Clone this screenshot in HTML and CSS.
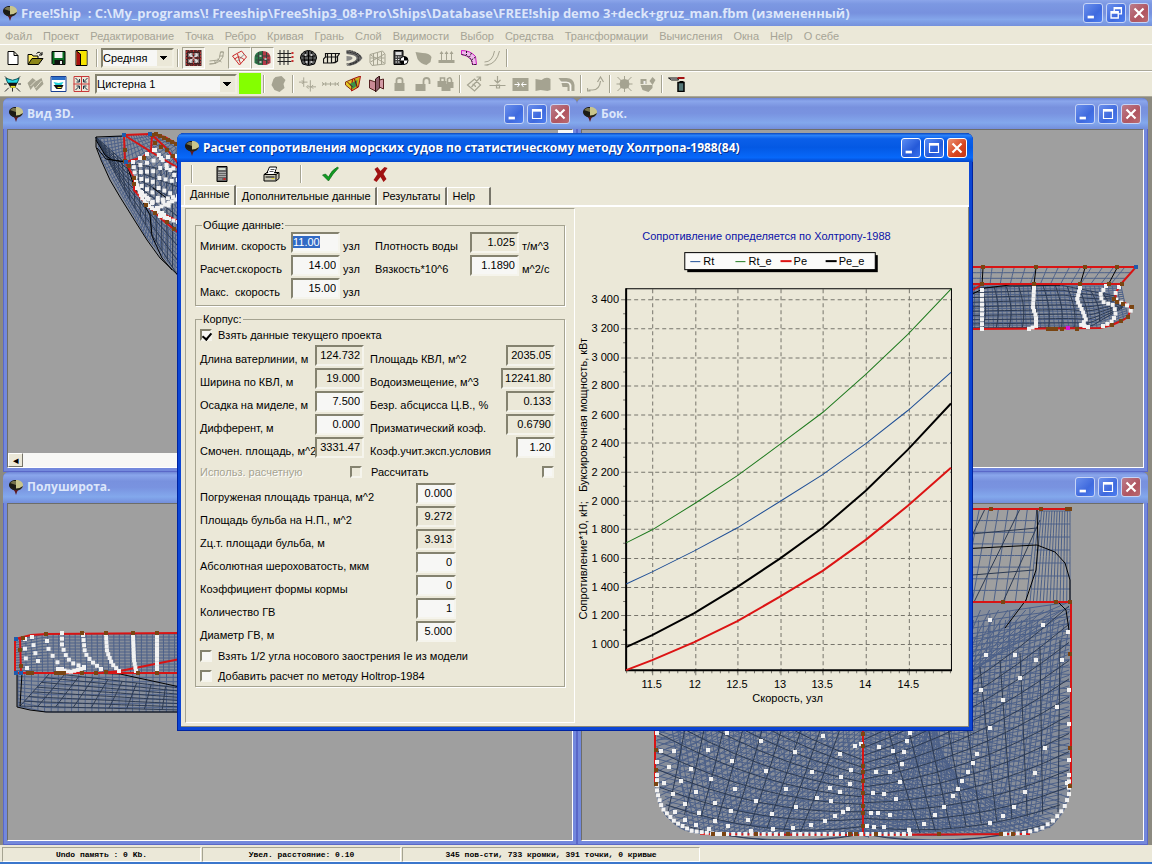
FILE: index.html
```html
<!DOCTYPE html>
<html lang="ru">
<head>
<meta charset="utf-8">
<title>Free!Ship</title>
<link rel="stylesheet" href="styles.css">
</head>
<body>
<svg class="sprites" aria-hidden="true">
  <symbol id="app" viewBox="0 0 16 16"><path d="M8 1C4 1 1 3 1 6s3 5 7 5z" fill="#1c1a14"/><path d="M8 1c4 0 7 2 7 5s-3 5-7 5z" fill="#c9c58c"/><path d="M2 4l3-2 3 0v4z" fill="#77734c"/><path d="M2 7q6 5 13 0-1 4-7 5-5-1-6-5z" fill="#222019"/><path d="M6 11h4l-1 2-1 3-1-3z" fill="#5d1a20"/></symbol>
  <symbol id="min" viewBox="0 0 20 20"><path d="M4 13h7v3H4z" fill="#fff"/></symbol>
  <symbol id="max" viewBox="0 0 20 20"><path d="M5 5h10v10H5zM5 6.500h10" fill="none" stroke="#fff" stroke-width="1.300"/><path d="M5 4.500h10v2.500H5z" fill="#fff"/></symbol>
  <symbol id="restore" viewBox="0 0 20 20"><path d="M8 8V4h8v7h-3M8 5h8" fill="none" stroke="#fff" stroke-width="1.500"/><path d="M4.500 8.500h8v7h-8zM4 10h9" fill="none" stroke="#fff" stroke-width="1.500"/></symbol>
  <symbol id="cls" viewBox="0 0 20 20"><path d="M5 5l10 10M15 5L5 15" stroke="#fff" stroke-width="2.400"/></symbol>

  <symbol id="new" viewBox="0 0 16 16"><path d="M3.500 1.500h6l4 4v9h-10zM9.500 1.500v4h4" fill="#fff" stroke="#000"/></symbol>
  <symbol id="open" viewBox="0 0 16 16"><path d="M.5 14V4.500h4l1 1.500h5v3" fill="#ffee60" stroke="#000"/><path d="M.5 14.500l4-6h11l-4.500 6z" fill="#8b8518" stroke="#000"/><path d="M9 3.500q3-3 5 1M14.500 2v3h-3" fill="none" stroke="#000"/></symbol>
  <symbol id="save" viewBox="0 0 16 16"><path d="M1.500 1.500h13v13h-12l-1-1z" fill="#0a6f22" stroke="#000"/><path d="M4 2h8v6H4z" fill="#f4f4f4"/><path d="M4 10h9v5H4z" fill="#111"/><path d="M9.500 11h2v3h-2z" fill="#eee"/></symbol>
  <symbol id="exit" viewBox="0 0 16 16"><path d="M2.500.5h11v15h-11z" fill="#fff35a" stroke="#000"/><path d="M7 1h6v14H7z" fill="#f6e400"/><path d="M3 1l4 3v11l-4 0z" fill="#a81010"/><path d="M3 1l4 3v11" fill="none" stroke="#000"/></symbol>
  <symbol id="net" viewBox="0 0 16 16"><path d="M0 0h16v16H0z" fill="#3a2222"/><path d="M3 3h4v4H3zM9 3h4v4H9zM3 9h4v4H3zM9 9h4v4H9z" fill="#c6c6c6"/><path d="M1 1h14v14H1zM8 0v16M0 8h16" fill="none" stroke="#b03030" stroke-dasharray="2 1"/><path d="M0 4h16M0 12h16M4 0v16M12 0v16" stroke="#8c6a6a" stroke-dasharray="1 2"/><path d="M4 4l8 8M12 4l-8 8" stroke="#fff" stroke-dasharray="2 1"/></symbol>
  <symbol id="gcurve" viewBox="0 0 16 16"><path d="M1 14q10 1 11-12h3q0 12-14 12zM1 11l9-1M12 2l3 0M11 6h4M9 9l4 3M6 10l1 4" fill="none" stroke="#a5a391"/></symbol>
  <symbol id="quad" viewBox="0 0 16 16"><path d="M1 6L10 1l5 6-7 8zM3 9q4-3 5-2 3 1 5 3M6 4l3 10" fill="none" stroke="#c92a2a"/><path d="M6 11l7-7" stroke="#888"/></symbol>
  <symbol id="body" viewBox="0 0 16 16"><path d="M8 1C3 1 0 4 0 8v5l4 2h4z" fill="#2a7446"/><path d="M8 1c5 0 8 3 8 7v5l-4 2H8z" fill="#b43b48"/><path d="M1 6h14M1 10h14M8 1v14M4 2v12M12 2v12M2 13q6-8 12 0" fill="none" stroke="#34453c"/><path d="M5 5h2v2H5zM10 8h2v2h-2zM5 11h2v2H5z" fill="#bbb"/></symbol>
  <symbol id="grid" viewBox="0 0 16 16"><path d="M2.500 0v15M6.500 0v15M10.500 0v15M0 3.500h14M0 7.500h14M0 11.500h14" stroke="#222"/><path d="M14 2h2v2h-2zM14 6h2v2h-2zM14 10h2v2h-2z" fill="#c33"/></symbol>
  <symbol id="globe" viewBox="0 0 16 16"><path d="M8 .5C3 1 0 4 0 8l2 6 6 1.500 6-1.500 2-6C16 4 13 1 8 .500z" fill="#5b5d5d" stroke="#000"/><path d="M1 6h14M1 10h14M8 1v14M5 2q-3 6 0 12M11 2q3 6 0 12" fill="none" stroke="#000"/><path d="M4 4h2v2H4zM10 4h2v2h-2zM5 11h2v2H5zM10 11h2v2h-2z" fill="#ccc"/></symbol>
  <symbol id="hull" viewBox="0 0 16 16"><path d="M2 3.500h14l-2 3v4.500q-2 2-6 2H0V9l2-2zM2 7h12M4 4v9M8 4v9M12 4v8" fill="none" stroke="#111" stroke-width="1.200"/></symbol>
  <symbol id="waves" viewBox="0 0 16 16"><path d="M0 0q14 2 16 8Q12 15 0 16l3-3q7-2 7-5 0-3-10-4z" fill="#696969"/><path d="M0 6q6 0 6 2t-6 3z" fill="#8a8a88"/><path d="M0 2q12 1 12 6t-12 6M2 0q12 3 12 8M3 15q8-2 10-6" fill="none" stroke="#222" stroke-dasharray="2 1"/></symbol>
  <symbol id="frame" viewBox="0 0 16 16"><path d="M.5 4.500L13 1l2.500 3v10l-13 1.500-2-3zM1 12L15 4M4 3v12M8 3v12M12 2v12M1 8h14M1 5l14 8" fill="none" stroke="#a5a391"/></symbol>
  <symbol id="calc" viewBox="0 0 16 16"><path d="M1.500.5h9v14h-9z" fill="#444" stroke="#000"/><path d="M3 2h6v3H3z" fill="#ddd"/><path d="M3 7h6M3 9.500h6M3 12h6" stroke="#eee" stroke-dasharray="1.500 1"/><circle cx="11.500" cy="10.500" r="4" fill="#fff" stroke="#000"/><path d="M11.500 6.500a4 4 0 0 1 4 4h-4zM11.500 10.500v4a4 4 0 0 1-4-4z"/></symbol>
  <symbol id="blob" viewBox="0 0 16 16"><path d="M0 2l7 1q7 0 9 4l-1 5-4 3q-6-1-9-6z" fill="#a5a391"/></symbol>
  <symbol id="arrows" viewBox="0 0 16 16"><path d="M3 11V2M8 11V2M13 11V2" stroke="#a5a391"/><path d="M0 11.500h16" stroke="#a5a391" stroke-width="3"/><path d="M1 4l2-3 2 3zM6 4l2-3 2 3zM11 4l2-3 2 3z" fill="#a5a391"/></symbol>
  <symbol id="mag" viewBox="0 0 16 16"><path d="M0 .5q9 0 14 6l1 8h-4q0-8-11-10z" fill="#f0b8ec" stroke="#cc19c0"/><path d="M0 4.500q10 1 11 10h4M5 1v4M10 3l-2 4M14 7l-4 3" fill="none" stroke="#222" stroke-dasharray="2 1"/></symbol>
  <symbol id="swoop" viewBox="0 0 16 16"><path d="M0 12q8 0 10-11M2 15Q12 14 15 1M0 15h4" fill="none" stroke="#a5a391"/></symbol>

  <symbol id="hi1" viewBox="0 0 18 16"><path d="M1 0l3 3M17 0l-3 3M0 8h3M18 8h-3M1 16l4-4M17 16l-4-4M9 12v4" stroke="#222"/><path d="M2 2l7 2 7-2-2 5H4z" fill="#20d5df" stroke="#084f55"/><path d="M4 7h10l-2 5H7z" fill="#111"/><path d="M7 10h5v2H7z" fill="#e8e42b"/></symbol>
  <symbol id="gray2" viewBox="0 0 16 16"><path d="M0 7l5-5 4 3 5-3 2 6-7 7-3-5-3 4z" fill="#a5a391"/><path d="M3 10l6-6M8 12l6-7" stroke="#e2dfcc"/></symbol>
  <symbol id="win2" viewBox="0 0 16 16"><path d="M.5.500h15v15H.5z" fill="#fff" stroke="#173f92"/><path d="M1 1h14v3H1z" fill="#2e70c9"/><path d="M3 6l5 1 5-1-2 3H5z" fill="#20cdd7"/><path d="M3 9h10l-2 4H6z" fill="#111"/><path d="M7 11h4v1H7z" fill="#f0e030"/></symbol>
  <symbol id="cross4" viewBox="0 0 16 16"><path d="M.5.500h15v15H.5zM8 0v16M0 8h16" fill="none" stroke="#c83a3a"/><path d="M2 2l4 4M6 3v3H3M14 2l-4 4M10 3v3h3M2 14l4-4M3 10h3v3M14 14l-4-4M13 10h-3v3" fill="none" stroke="#234"/></symbol>
  <symbol id="blob2" viewBox="0 0 16 16"><path d="M5 1l6-1 4 4-2 4 1 4-5 4-5-2-3-5 2-6z" fill="#a5a391"/></symbol>
  <symbol id="ax1" viewBox="0 0 18 16"><path d="M0 6h9M5 1v10M3 4l2 2-2 2M9 11h9M12 4v12M10 9l-2 2 2 2M15 9l-2 2 2 2" fill="none" stroke="#a5a391"/></symbol>
  <symbol id="ax2" viewBox="0 0 18 16"><path d="M0 8h18M4 6v4M9 6v4M14 6v4M0 6l2 2-2 2M18 6l-2 2 2 2" fill="none" stroke="#a5a391"/></symbol>
  <symbol id="yel" viewBox="0 0 16 16"><path d="M0 6L7 3l-1 11-6-5z" fill="#e4c821" stroke="#852f14"/><path d="M7 3l8-3-2 11-7 4z" fill="#c9b11b" stroke="#a11"/><path d="M4 8l8-4-1 6-4 3z" fill="#3a9148"/><path d="M2 6l5 5M9 3l3 9" stroke="#701"/></symbol>
  <symbol id="pink" viewBox="0 0 16 16"><path d="M1 4l6 2v9l-6-3z" fill="#c98995" stroke="#522"/><path d="M7 3l4-3v12l-4 4z" fill="#8e5c6b" stroke="#311"/><path d="M11 4l4-1v10l-4-2z" fill="#d39ba5" stroke="#522"/></symbol>
  <symbol id="lock" viewBox="0 0 16 16"><path d="M3 7h10v8H3z" fill="#a5a391"/><path d="M5 8V4q0-2 3-2t3 2v4" fill="none" stroke="#a5a391" stroke-width="1.800"/></symbol>
  <symbol id="unlock" viewBox="0 0 16 16"><path d="M1 8h10v7H1z" fill="#a5a391"/><path d="M9 8V5q0-3 3-3t3 3v3" fill="none" stroke="#a5a391" stroke-width="1.800"/></symbol>
  <symbol id="unlocks" viewBox="0 0 16 16"><path d="M0 5h9v6H0zM4 8h9v7H4zM10 6h6v6h-6z" fill="#a5a391"/><path d="M3 5V2h4v3M10 8V3q3-3 4 1v3" fill="none" stroke="#a5a391" stroke-width="1.600"/></symbol>
  <symbol id="diam" viewBox="0 0 16 16"><path d="M1 9l7-6 6 6-6 6zM5 11L14 1M10 1h4v4M6 8q3 1 3 3" fill="none" stroke="#a5a391" stroke-width="1.200"/></symbol>
  <symbol id="ins" viewBox="0 0 16 16"><path d="M0 9.500h16M8 0v7M5 4l3 3 3-3M7 9h3v3H7z" fill="none" stroke="#a5a391" stroke-width="1.200"/></symbol>
  <symbol id="coll" viewBox="0 0 16 16"><path d="M0 2h16v13H0z" fill="#a5a391"/><path d="M2 8.500h5M5 6l2 2.500L5 11M14 8.500H9M11 6L9 8.500l2 2.500" fill="none" stroke="#fff"/></symbol>
  <symbol id="surf" viewBox="0 0 16 16"><path d="M0 3l6 1q5-4 9-1v11l-3 1-7-1-5 1z" fill="#a5a391"/></symbol>
  <symbol id="extr" viewBox="0 0 16 16"><path d="M0 2h8q7 0 8 7v6h-3V9q-1-3-5-3H3z" fill="#a5a391"/><path d="M3 7h5q3 0 3 3v5H9v-4H4z" fill="#a5a391"/><path d="M2 6h6q4 0 4 4v5" fill="none" stroke="#fff" stroke-width=".7"/></symbol>
  <symbol id="cv" viewBox="0 0 16 16"><path d="M1 14h4q7 0 8-9M10 6l3-5 3 5M0 12v3h3" fill="none" stroke="#a5a391" stroke-width="1.200"/></symbol>
  <symbol id="star" viewBox="0 0 16 16"><path d="M1 1l14 14M15 1L1 15M8 0v16M0 8h16" stroke="#a5a391"/><path d="M4 4l4-1 4 1 1 4-1 4-4 1-4-1-1-4z" fill="#a5a391"/></symbol>
  <symbol id="team" viewBox="0 0 16 16"><path d="M1 3h6v5H1zM10 5l3-4 3 3-3 5zM1 9h12v3l-4 4-6-2z" fill="#a5a391"/><path d="M4 5h2v3H4z" fill="#eee"/></symbol>
  <symbol id="knife" viewBox="0 0 16 16"><path d="M0 2h9l1 2H3z" fill="#ddd" stroke="#111"/><path d="M9 1h7v2H9z" fill="#a31111"/><path d="M9.500 6.500h6v9h-6z" fill="#577" stroke="#000" stroke-width="1.500"/><path d="M11 5h4v2h-4z"/></symbol>

  <symbol id="dcalc" viewBox="0 0 16 16"><path d="M3.500.5h10v15h-10z" fill="#666" stroke="#000"/><path d="M5 2h7v2H5z" fill="#d6e0d0"/><path d="M5 6.500h7M5 8.500h7M5 10.500h7M5 13h3" stroke="#eee" stroke-dasharray="1 1"/><path d="M10 12h2v2h-2z" fill="#c22"/></symbol>
  <symbol id="print" viewBox="0 0 16 16"><path d="M3 8L6 1h7l-2 7" fill="#fff" stroke="#000"/><path d="M7 3h4M6 5h4" stroke="#555"/><path d="M.5 8.500l3-2h12v6l-3 2.500H.5z" fill="#c8c6b5" stroke="#000"/><path d="M4 8L6.500 2h6L10 8z" fill="#fff"/><path d="M7 3.500h4M6 5.500h4" stroke="#555"/><path d="M.5 8.500h12v6M12.500 8.500l3-2M2 11h9" fill="none" stroke="#000"/><path d="M8 12h3v1H8z" fill="#e6d72d"/></symbol>
  <symbol id="ok" viewBox="0 0 16 16"><path d="M0 9l3-1 3 3Q9 4 15 1l1 1Q10 8 6 15z" fill="#119c22" stroke="#0a5c14" stroke-width=".6"/></symbol>
  <symbol id="no" viewBox="0 0 16 16"><path d="M2 3l3-2 3 4 4-4 3 1-4 6 3 5-3 3-3-5-4 5-3-2 4-6z" fill="#a01212"/></symbol>
</svg>

<div class="app">
  <header class="titlebar">
    <svg class="logo"><use href="#app"/></svg>
    <h1 class="caption">Free!Ship&nbsp; : C:\My_programs\! Freeship\FreeShip3_08+Pro\Ships\Database\FREE!ship demo 3+deck+gruz_man.fbm (измененный)</h1>
    <button class="wbtn" aria-label="Свернуть"><svg><use href="#min"/></svg></button>
    <button class="wbtn" aria-label="Восстановить"><svg><use href="#restore"/></svg></button>
    <button class="wbtn wbtn-close" aria-label="Закрыть"><svg><use href="#cls"/></svg></button>
  </header>
  <nav class="menu">
    <button>Файл</button><button>Проект</button><button>Редактирование</button><button>Точка</button><button>Ребро</button><button>Кривая</button><button>Грань</button><button>Слой</button><button>Видимости</button><button>Выбор</button><button>Средства</button><button>Трансформации</button><button>Вычисления</button><button>Окна</button><button>Help</button><button>О себе</button>
  </nav>
  <div class="toolbar">
    <button class="tool" aria-label="Новый"><svg><use href="#new"/></svg></button>
    <button class="tool" aria-label="Открыть"><svg><use href="#open"/></svg></button>
    <button class="tool" aria-label="Сохранить"><svg><use href="#save"/></svg></button>
    <button class="tool" aria-label="Выход"><svg><use href="#exit"/></svg></button>
    <span class="sep"></span>
    <select class="combo combo-short" aria-label="Точность"><option>Средняя</option></select>
    <span class="sep"></span>
    <button class="tool pressed" aria-label="Контрольная сетка"><svg><use href="#net"/></svg></button>
    <button class="tool" aria-label="Кривые"><svg><use href="#gcurve"/></svg></button>
    <button class="tool pressed" aria-label="Ребра"><svg><use href="#quad"/></svg></button>
    <button class="tool pressed" aria-label="Обе половины"><svg><use href="#body"/></svg></button>
    <button class="tool" aria-label="Сетка"><svg><use href="#grid"/></svg></button>
    <button class="tool" aria-label="Шпангоуты"><svg><use href="#globe"/></svg></button>
    <button class="tool" aria-label="Батоксы"><svg><use href="#hull"/></svg></button>
    <button class="tool" aria-label="Ватерлинии"><svg><use href="#waves"/></svg></button>
    <button class="tool" aria-label="Диагонали"><svg><use href="#frame"/></svg></button>
    <button class="tool" aria-label="Гидростатика"><svg><use href="#calc"/></svg></button>
    <button class="tool" aria-label="Кривизна"><svg><use href="#blob"/></svg></button>
    <button class="tool" aria-label="Нормали"><svg><use href="#arrows"/></svg></button>
    <button class="tool" aria-label="Кривизна линии"><svg><use href="#mag"/></svg></button>
    <button class="tool" aria-label="Маркеры"><svg><use href="#swoop"/></svg></button>
    <span class="sep sep-thin"></span>
  </div>
  <div class="toolbar">
    <button class="tool" aria-label="Слой"><svg><use href="#hi1"/></svg></button>
    <button class="tool" aria-label="Группа"><svg><use href="#gray2"/></svg></button>
    <button class="tool" aria-label="Свойства слоя"><svg><use href="#win2"/></svg></button>
    <button class="tool" aria-label="Авто"><svg><use href="#cross4"/></svg></button>
    <select class="combo combo-long" aria-label="Активный слой"><option>Цистерна 1</option></select>
    <button class="swatch" aria-label="Цвет слоя"></button>
    <span class="sep sep-thin"></span>
    <button class="tool" aria-label="Поверхность"><svg><use href="#blob2"/></svg></button>
    <span class="sep sep-thin"></span>
    <button class="tool" aria-label="Выровнять"><svg><use href="#ax1"/></svg></button>
    <button class="tool" aria-label="Проекция"><svg><use href="#ax2"/></svg></button>
    <button class="tool" aria-label="Пересечь слои"><svg><use href="#yel"/></svg></button>
    <button class="tool" aria-label="Пересечь плоскостью"><svg><use href="#pink"/></svg></button>
    <button class="tool" aria-label="Заблокировать"><svg><use href="#lock"/></svg></button>
    <button class="tool" aria-label="Разблокировать"><svg><use href="#unlock"/></svg></button>
    <button class="tool" aria-label="Разблокировать все"><svg><use href="#unlocks"/></svg></button>
    <span class="sep sep-thin"></span>
    <button class="tool" aria-label="Выдавить"><svg><use href="#diam"/></svg></button>
    <button class="tool" aria-label="Вставить"><svg><use href="#ins"/></svg></button>
    <button class="tool" aria-label="Стянуть"><svg><use href="#coll"/></svg></button>
    <button class="tool" aria-label="Грань"><svg><use href="#surf"/></svg></button>
    <button class="tool" aria-label="Экструзия"><svg><use href="#extr"/></svg></button>
    <span class="sep sep-thin"></span>
    <button class="tool" aria-label="Кривая"><svg><use href="#cv"/></svg></button>
    <span class="sep sep-thin"></span>
    <button class="tool" aria-label="Излом"><svg><use href="#star"/></svg></button>
    <button class="tool" aria-label="Обратить"><svg><use href="#team"/></svg></button>
    <span class="sep sep-thin"></span>
    <button class="tool" aria-label="Удалить"><svg><use href="#knife"/></svg></button>
  </div>

  <main class="desk">
    <section class="view">
      <header class="view-title">
        <svg class="logo"><use href="#app"/></svg><h2 class="caption">Вид 3D.</h2>
        <button class="wbtn" aria-label="Свернуть"><svg><use href="#min"/></svg></button>
        <button class="wbtn" aria-label="Развернуть"><svg><use href="#max"/></svg></button>
        <button class="wbtn wbtn-close" aria-label="Закрыть"><svg><use href="#cls"/></svg></button>
      </header>
      <div class="view-body with-scroll">
        <svg class="canvas"><g id="persp" transform="translate(-8 -130)"></g></svg>
        <div class="vscroll"></div>
        <div class="hscroll"><button aria-label="Влево">◂</button></div>
      </div>
    </section>
    <section class="view">
      <header class="view-title">
        <svg class="logo"><use href="#app"/></svg><h2 class="caption">Бок.</h2>
        <button class="wbtn" aria-label="Свернуть"><svg><use href="#min"/></svg></button>
        <button class="wbtn" aria-label="Развернуть"><svg><use href="#max"/></svg></button>
        <button class="wbtn wbtn-close" aria-label="Закрыть"><svg><use href="#cls"/></svg></button>
      </header>
      <div class="view-body"><svg class="canvas"><g id="side" transform="translate(-582 -130)"></g></svg></div>
    </section>
    <section class="view">
      <header class="view-title">
        <svg class="logo"><use href="#app"/></svg><h2 class="caption">Полуширота.</h2>
        <button class="wbtn" aria-label="Свернуть"><svg><use href="#min"/></svg></button>
        <button class="wbtn" aria-label="Развернуть"><svg><use href="#max"/></svg></button>
        <button class="wbtn wbtn-close" aria-label="Закрыть"><svg><use href="#cls"/></svg></button>
      </header>
      <div class="view-body"><svg class="canvas"><g id="plan" transform="translate(-8 -504)"></g></svg></div>
    </section>
    <section class="view">
      <header class="view-title">
        <svg class="logo"><use href="#app"/></svg><h2 class="caption">Корпус.</h2>
        <button class="wbtn" aria-label="Свернуть"><svg><use href="#min"/></svg></button>
        <button class="wbtn" aria-label="Развернуть"><svg><use href="#max"/></svg></button>
        <button class="wbtn wbtn-close" aria-label="Закрыть"><svg><use href="#cls"/></svg></button>
      </header>
      <div class="view-body"><svg class="canvas"><g id="bodyplan" transform="translate(-582 -504)"></g></svg></div>
    </section>
  </main>

  <footer class="status">
    <span class="cell">Undo память : 0 Kb.</span>
    <span class="cell">Увел. расстояние: 0.10</span>
    <span class="cell cell-wide">345 пов-сти, 733 кромки, 391 точки, 0 кривые</span>
  </footer>
</div>

<div class="dialog" role="dialog" aria-labelledby="dlg-title">
  <header class="dialog-title">
    <svg class="logo"><use href="#app"/></svg>
    <h2 class="caption" id="dlg-title">Расчет сопротивления морских судов по статистическому методу Холтропа-1988(84)</h2>
    <button class="wbtn" aria-label="Свернуть"><svg><use href="#min"/></svg></button>
    <button class="wbtn" aria-label="Развернуть"><svg><use href="#max"/></svg></button>
    <button class="wbtn wbtn-close" aria-label="Закрыть"><svg><use href="#cls"/></svg></button>
  </header>
  <div class="dialog-tools">
    <span class="sep"></span>
    <button class="dtool" aria-label="Рассчитать"><svg><use href="#dcalc"/></svg></button>
    <button class="dtool" aria-label="Печать"><svg><use href="#print"/></svg></button>
    <span class="sep"></span>
    <button class="dtool" aria-label="Принять"><svg><use href="#ok"/></svg></button>
    <button class="dtool" aria-label="Отмена"><svg><use href="#no"/></svg></button>
  </div>
  <div class="tabs" role="tablist">
    <button class="tab active" role="tab">Данные</button><button class="tab" role="tab">Дополнительные данные</button><button class="tab" role="tab">Результаты</button><button class="tab tab-help" role="tab">Help</button>
  </div>
  <div class="page">
    <form class="form">
      <fieldset class="group">
        <legend>Общие данные:</legend>
        <div class="general">
          <label for="vmin">Миним. скорость</label><input id="vmin" class="sel" value="11.00"><span>узл</span>
          <label for="rho">Плотность воды</label><input id="rho" value="1.025" readonly><span>т/м^3</span>
          <label for="vdes">Расчет.скорость</label><input id="vdes" value="14.00"><span>узл</span>
          <label for="nu">Вязкость*10^6</label><input id="nu" value="1.1890"><span>м^2/с</span>
          <label for="vmax">Макс.&nbsp; скорость</label><input id="vmax" value="15.00"><span>узл</span>
        </div>
      </fieldset>
      <fieldset class="group">
        <legend>Корпус:</legend>
        <label class="check check-top"><input type="checkbox" checked>Взять данные текущего проекта</label>
        <div class="hull">
          <label for="lwl">Длина ватерлинии, м</label><input id="lwl" value="124.732" readonly>
          <label for="awp">Площадь КВЛ, м^2</label><input id="awp" value="2035.05" readonly>
          <label for="bwl">Ширина по КВЛ, м</label><input id="bwl" value="19.000" readonly>
          <label for="vol">Водоизмещение, м^3</label><input id="vol" class="wide" value="12241.80" readonly>
          <label for="dr">Осадка на миделе, м</label><input id="dr" value="7.500">
          <label for="xcb">Безр. абсцисса Ц.В., %</label><input id="xcb" value="0.133" readonly>
          <label for="trim">Дифферент, м</label><input id="trim" value="0.000">
          <label for="cp">Призматический коэф.</label><input id="cp" value="0.6790" readonly>
          <label for="wet">Смочен. площадь, м^2</label><input id="wet" value="3331.47" readonly>
          <label for="kex">Коэф.учит.эксп.условия</label><input id="kex" class="narrow" value="1.20">
        </div>
        <div class="flags">
          <label class="off" for="useest">Использ. расчетную</label><input id="useest" type="checkbox" disabled>
          <label for="calcit">Рассчитать</label><input id="calcit" type="checkbox">
        </div>
        <div class="extra">
          <label for="tr">Погруженая площадь транца, м^2</label><input id="tr" value="0.000">
          <label for="ab">Площадь бульба на Н.П., м^2</label><input id="ab" value="9.272" readonly>
          <label for="zb">Zц.т. площади бульба, м</label><input id="zb" value="3.913" readonly>
          <label for="rough">Абсолютная шероховатость, мкм</label><input id="rough" value="0">
          <label for="stern">Коэффициент формы кормы</label><input id="stern" value="0">
          <label for="np">Количество ГВ</label><input id="np" value="1">
          <label for="dp">Диаметр ГВ, м</label><input id="dp" value="5.000">
        </div>
        <label class="check"><input type="checkbox">Взять 1/2 угла носового заострения Ie из модели</label>
        <label class="check"><input type="checkbox">Добавить расчет по методу Holtrop-1984</label>
      </fieldset>
    </form>
    <div class="chart-panel">
      <svg class="chart" viewBox="576 208 393 514" role="img" aria-label="Сопротивление определяется по Холтропу-1988">
        <text x="767" y="240" class="chart-title">Сопротивление определяется по Холтропу-1988</text>
        <rect x="688" y="255" width="190" height="17"/>
        <rect x="685.500" y="252.500" width="190" height="17" class="legend-box"/>
        <path d="M691 261.500h10" class="rt"/><text x="704" y="265">Rt</text>
        <path d="M736 261.500h10" class="rte"/><text x="749" y="265">Rt_e</text>
        <path d="M781 261h11" class="pe"/><text x="794" y="265">Pe</text>
        <path d="M826 261h11" class="pee"/><text x="839" y="265">Pe_e</text>
        <g id="axes"></g>
        <path d="M627 288v381h325" class="axis"/><path d="M627 288.500h324.500v381" class="border"/>
        <path class="rte" d="M627 542L653 529 695 503 738 475 780 444 823 412 866 374 908 334 951 289"/>
        <path class="rt" d="M627 583L653 571 695 550 738 527 780 501 823 474 866 443 908 410 951 372"/>
        <path class="pee" d="M627 646L653 634 695 612 738 586 780 558 823 527 866 490 908 449 951 403"/>
        <path class="pe" d="M627 669L653 659 695 641 738 620 780 596 823 570 866 539 908 505 951 467"/>
        <text x="788" y="701" class="mid">Скорость, узл</text>
        <text class="mid" xml:space="preserve" transform="translate(588 478) rotate(-90)">Сопротивление*10, кН;   Буксировочная мощность, кВт</text>
      </svg>
    </div>
  </div>
</div>
<script src="drawing.js"></script>
</body>
</html>
```
FILE: styles.css
```css
* { box-sizing: border-box; }
html, body { height: 100%; }
body { margin: 0; overflow: hidden; font: 11px/14px "Liberation Sans", Arial, sans-serif; color: #000; background: #ebe8d8; }
button { font: inherit; color: inherit; border: 0; padding: 0; background: none; }
h1, h2 { margin: 0; }
svg { display: block; }
.sprites { position: absolute; width: 0; height: 0; }

.app { display: flex; flex-direction: column; min-height: 100vh; }

.titlebar, .view-title, .dialog-title { display: flex; align-items: center; gap: 3px; flex: none; }
.titlebar { height: 26px; padding: 0 3px 0 2px; background: linear-gradient(#8ba5ea, #7c98e2 15%, #7791de 50%, #84a6ea 75%, #7490dc); }
.logo { width: 16px; height: 16px; flex: none; }
.caption { flex: 1; font: bold 12px/16px "Open Sans", "Noto Sans", sans-serif; color: #dce6fa; white-space: nowrap; overflow: hidden; }
.titlebar .caption { font-size: 13px; }
.wbtn { width: 20px; height: 20px; flex: none; border: 1px solid #c6d4f6; border-radius: 3px; background: linear-gradient(135deg, #6b90ec, #3f6ade 60%, #4d7ef0); }
.wbtn svg { width: 18px; height: 18px; }
.wbtn-close { background: linear-gradient(135deg, #bb7c8b, #b05560 60%, #ba6b70); }

.menu { display: flex; height: 19px; align-items: center; gap: 11px; padding: 2px 0 0 5px; color: #a6a496; border-bottom: 1px solid #fff; }
.toolbar { display: flex; height: 26px; align-items: center; padding-left: 1px; border-bottom: 1px solid #aaa899; box-shadow: 0 1px 0 #fff; }
.tool { width: 23px; height: 22px; display: grid; place-items: center; flex: none; }
.tool svg { width: 17px; height: 16px; }
.pressed { border: 1px solid; border-color: #a5a391 #fff #fff #a5a391; background: #f2f0e6; }
.sep { width: 8px; height: 18px; flex: none; display: grid; justify-content: center; }
.sep::before { content: ""; width: 2px; height: 18px; background: linear-gradient(90deg, #a5a391 50%, #fff 50%); }
.sep-thin { width: 6px; }
.combo { appearance: none; height: 20px; font: inherit; padding: 0; border: 2px solid; border-color: #84826f #f1efe2 #f1efe2 #84826f; border-radius: 0; color: #000;
  background: linear-gradient(45deg, transparent 50%, #000 50%) right 8px top 6px / 4px 4px no-repeat,
    linear-gradient(-45deg, transparent 50%, #000 50%) right 4px top 6px / 4px 4px no-repeat,
    linear-gradient(#ebe8d8, #ebe8d8) right / 15px no-repeat, #f7f7f5; }
.combo-short { width: 73px; }
.combo-long { width: 142px; margin: 0 2px; }
.swatch { width: 22px; height: 21px; background: #84ff00; }

.desk { flex: 1; display: grid; grid-template-columns: 574fr 571fr; grid-template-rows: 1fr 1fr; padding: 1px 4px 0 3px; background: #8c8a80; }
.view { display: flex; flex-direction: column; min-width: 0; min-height: 0; padding: 0 4px 4px; border-radius: 6px 6px 0 0; background: #7388dc; box-shadow: inset 0 0 0 1px #5a68c8; }
.view-title { height: 31px; padding: 0 7px 0 5px; margin: 0 -4px; border-radius: 6px 6px 0 0; background: linear-gradient(#6f86d6, #8aa6ec 10%, #7891de 30%, #7993e0 50%, #83a8ec 80%, #738edb); }
.view-body { flex: 1; position: relative; min-height: 0; overflow: hidden; border: 1px solid; border-color: #6d6d69 #fff #fff #6d6d69; background: #9f9f9f; }
.canvas { position: absolute; inset: 0; width: 100%; height: 100%; }
.with-scroll { display: grid; grid-template: 1fr 14px / 1fr 14px; }
.vscroll { grid-area: 1 / 2; position: relative; background: #f7f7f5; }
.hscroll { grid-area: 2 / 1 / 3 / 3; position: relative; background: #f7f7f5; }
.hscroll button { width: 15px; height: 14px; line-height: 12px; border: 1px solid; border-color: #fff #77756a #77756a #fff; background: #ebe8d8; display: block; }

.status { display: flex; height: 18px; flex: none; margin-top: 1px; padding: 1px 2px 0; gap: 1px; border-bottom: 2px solid #3b77cc; font: bold 8px/14px "Liberation Mono", monospace; }
.cell { flex: 0 0 199px; text-align: center; border: 1px solid; border-color: #a5a391 #fff #fff #a5a391; }
.cell-wide { flex-basis: 298px; }

.dialog { position: absolute; left: 177px; top: 133px; width: 796px; display: flex; flex-direction: column; padding: 0 4px 4px; border-radius: 7px 7px 0 0; background: #0c46d4; box-shadow: inset 0 0 0 1px #0023a0; }
.dialog-title { height: 29px; margin: 0 -4px; padding: 1px 6px 0 7px; border-radius: 7px 7px 0 0; background: linear-gradient(#0b45bb, #2b83fa 8%, #0b5fe9 20%, #0459e4 50%, #0768fa 85%, #0444c8); }
.dialog-title .caption { color: #fff; text-shadow: 1px 1px #06308e; }
.dialog-title .wbtn { border-color: #fff; background: linear-gradient(135deg, #5a8cf4, #2459d8 60%, #3a74ee); }
.dialog-title .wbtn-close { background: linear-gradient(135deg, #ea9274, #d8441f 60%, #c4381a); }
.dialog-tools { display: flex; align-items: center; height: 23px; padding-left: 6px; background: #ebe8d8; }
.dialog-tools .sep { width: 9px; }
.dtool { width: 50px; height: 22px; display: grid; place-items: center; }
.dtool svg { width: 17px; height: 16px; }
.tabs { display: flex; align-items: end; height: 20px; padding-left: 3px; background: #ebe8d8; font-size: 11px; }
.tab { height: 18px; padding: 0 4px 2px 5px; border: solid; border-width: 1px 2px 0 1px; border-color: #fff #77756a #fff #fff; }
.tab.active { height: 20px; padding-bottom: 3px; }
.tab-help { padding-right: 14px; }
.page { display: grid; grid-template-columns: 390px 1fr; padding: 1px 0 4px 4px; background: #ebe8d8; border-top: 2px solid #fff; box-shadow: inset -1px -1px #8a8878; }
.form { border: 1px solid; border-color: #a5a391 #fff #fff #a5a391; padding: 9px 9px 20px 9px; display: flex; flex-direction: column; gap: 6px; }
.group { margin: 0; padding: 0 4px; min-width: 0; border: 1px solid #a5a391; box-shadow: 1px 1px #fff; }
.group legend { padding: 0 1px; margin-left: 2px; height: 14px; }
.group input:not([type]) { width: 49px; height: 21px; padding: 0 2px 2px 0; font: inherit; text-align: right; border: 2px solid; border-color: #84826f #f5f4ec #f5f4ec #84826f; background: #f7f7f5; outline: 0; min-width: 0; }
.group input:read-only:not([type]) { background: #ebe8d8; }
.group input.sel { text-align: left; }
.sel::selection { background: #316ac5; color: #fff; }
.general, .hull, .extra { display: grid; grid-auto-rows: 23px; }
.general { grid-template-columns: 91px 49px 35px 95px 49px 1fr; margin: 0 0 4px; }
.general > label, .general > span, .hull label, .extra label { padding-top: 7px; white-space: nowrap; }
.general > span { padding-left: 3px; }
.hull { grid-template-columns: 115px 55px 1fr auto; padding-right: 5px; }
.hull input { justify-self: end; }
.hull label + input:nth-child(4n + 2) { justify-self: start; }
.group .wide:not([type]) { width: 54px; }
.group .narrow:not([type]) { width: 39px; }
.extra { grid-template-columns: 216px 40px; margin-bottom: 2px; }
.group .extra input:not([type]) { width: 40px; }
.flags { display: grid; grid-template-columns: 150px 21px 1fr 18px; height: 23px; align-items: center; }
.off { color: #a5a391; text-shadow: 1px 1px #fff; }
.check { display: flex; align-items: center; gap: 6px; height: 20px; }
.check-top { margin-top: -1px; }
input[type="checkbox"] { appearance: none; position: relative; width: 12px; height: 12px; margin: 0; border: 2px solid; border-color: #84826f #f5f4ec #f5f4ec #84826f; background: #f7f7f5; }
input[type="checkbox"]:disabled { background: #ebe8d8; }
input[type="checkbox"]:checked::after { content: ""; position: absolute; left: 2px; top: 0; width: 4px; height: 7px; border: solid #000; border-width: 0 2px 2px 0; transform: rotate(40deg); }

.chart { width: 100%; font: 11px "Liberation Sans", Arial, sans-serif; }
.chart path { fill: none; }
.chart .mid, .chart-title { text-anchor: middle; }
.chart-title { fill: #0a12a8; }
.legend-box { fill: #fbfbf9; stroke: #000; }
.end { text-anchor: end; }
.gridline { stroke: #77756c; stroke-dasharray: 4 3; }
.tick { stroke: #77756c; }
.axis { stroke: #000; stroke-width: 2; }
.border { stroke: #000; }
.rt { stroke: #1f4f96; }
.rte { stroke: #1f7a1f; }
.pe { stroke: #dc1414; stroke-width: 2; }
.pee { stroke: #000; stroke-width: 2; }

.skin { fill: #6d7b95; fill-opacity: .5; }
.mesh { fill: none; stroke: #4d6189; stroke-width: 1; }
.dark { fill: none; stroke: #2c3a52; stroke-width: 1; }
.outline { fill: none; stroke: #000; }
.edge { fill: none; stroke: #d81414; stroke-width: 2; }
.pt-w { fill: #f2f2f2; }
.pt-b { fill: #7a4512; }
.pt-s { fill: #1f5bab; }
```
FILE: drawing.js
```js
const NS = 'http://www.w3.org/2000/svg';

function add(parent, tag, attrs, text) {
  const el = document.createElementNS(NS, tag);
  for (const k in attrs) el.setAttribute(k, attrs[k]);
  if (text) el.textContent = text;
  parent.appendChild(el);
  return el;
}

/* "x,y x,y ..." -> [[x, y], ...] */
const pts = s => s.trim().split(/\s+/).map(p => p.split(',').map(Number));
const path = list => 'M' + list.map(p => p[0].toFixed(1) + ' ' + p[1].toFixed(1)).join('L');

/* point at fraction t of a polyline's length */
function at(poly, t) {
  const seg = poly.slice(1).map((p, i) => Math.hypot(p[0] - poly[i][0], p[1] - poly[i][1]));
  let d = t * seg.reduce((a, b) => a + b, 0);
  for (let i = 0; i < seg.length; i++) {
    if (d <= seg[i] || i === seg.length - 1) {
      const k = seg[i] ? Math.min(1, d / seg[i]) : 0;
      return [poly[i][0] + (poly[i + 1][0] - poly[i][0]) * k, poly[i][1] + (poly[i + 1][1] - poly[i][1]) * k];
    }
    d -= seg[i];
  }
}

/* ruled mesh between two polylines; bow bends the cross lines */
function mesh(g, a, b, nu, nv, bow = 0, cls = 'mesh') {
  const P = (u, v) => {
    const p = at(a, u), q = at(b, u), s = bow * Math.sin(Math.PI * v);
    return [p[0] + (q[0] - p[0]) * v + s, p[1] + (q[1] - p[1]) * v + s / 3];
  };
  let d = '';
  for (let i = 0; i <= nu; i++) d += path(Array.from({ length: 9 }, (_, k) => P(i / nu, k / 8)));
  for (let j = 0; j <= nv; j++) d += path(Array.from({ length: 25 }, (_, k) => P(k / 24, j / nv)));
  add(g, 'path', { class: cls, d });
}
const skin = (g, s) => add(g, 'path', { class: 'skin', d: path(pts(s)) + 'Z' });
const line = (g, cls, ...all) => all.forEach(s => add(g, 'path', { class: cls, d: path(pts(s)) }));
const dots = (g, cls, list) => list.forEach(([x, y]) => add(g, 'rect', { class: cls, x: x - 2, y: y - 2, width: 4, height: 4 }));
const trail = (g, s, n) => { const p = pts(s); dots(g, 'pt-w', Array.from({ length: n }, (_, i) => at(p, n > 1 ? i / (n - 1) : 0))); };
/* curves that sag from points on one polyline to points on another */
function fan(g, cls, a, b, n, sag) {
  const p = pts(a), q = pts(b);
  let d = '';
  for (let i = 0; i <= n; i++) {
    const [x1, y1] = at(p, i / n), [x2, y2] = at(q, i / n);
    d += `M${x1.toFixed(1)} ${y1.toFixed(1)}Q${((x1 + x2) / 2).toFixed(1)} ${((y1 + y2) / 2 + sag).toFixed(1)} ${x2.toFixed(1)} ${y2.toFixed(1)}`;
  }
  add(g, 'path', { class: cls, d });
}

/* perspective view */
{
  const g = document.getElementById('persp');
  skin(g, '96,137 124,135 150,134 178,144 178,276 160,258 147,240 135,221 120,197 110,180 101,160 96,147');
  mesh(g, pts('97,139 101,158 120,192 147,238 180,276'), pts('124,136 126,162 134,185 160,222 180,238'), 42, 8);
  mesh(g, pts('124,135 126,162 134,185 160,222 180,235'), pts('152,134 180,144 180,190'), 22, 12);
  mesh(g, pts('96,137 124,162 178,172'), pts('96,138 130,200 178,276'), 16, 7, 0, 'dark');
  line(g, 'outline', '96,137 124,136', '96,137 96,147 101,160 110,180 120,197 135,221 147,240 160,258 179,276', '96,140 105,155 112,160 126,162', '97,148 106,159 126,162', '126,162 134,186 150,215 152,236 162,258 172,270', '153,188 168,199');
  line(g, 'edge', '124,135 150,134 165,137 180,146', '124,135 125,162 134,177 134,190 148,206 165,222 180,234', '124,135 153,153 180,169', '126,162 143,157 151,150 152,135 166,148 180,166', '152,209 180,222');
  for (let i = 0; i < 7; i++) trail(g, `${133 + i * 7},${162 - i * (i < 4 ? 4 : 1)} ${137 + i * 5},${188 + i * 5}`, 6);
  trail(g, '136,182 142,198 150,207 164,215', 14); trail(g, '141,192 152,202 178,196', 9); trail(g, '158,208 179,198', 7); trail(g, '160,216 178,222', 5); trail(g, '155,150 178,180', 7);
  dots(g, 'pt-b', pts('125,150 125,161 152,135 156,134 160,136 164,138 168,140 172,142 176,144 155,143 161,147 167,150 173,156 134,178 134,184 146,205 155,213 167,222 174,229 144,158 129,166'));
  dots(g, 'pt-s', pts('124,135 150,134 126,162'));
}

/* side view */
{
  const g = document.getElementById('side');
  skin(g, '970,284 1121,284 1115,294 1117,302 1125,303 1131,308 1128,317 1121,321 1112,325 1100,328 970,329');
  mesh(g, pts('970,267 1136,267'), pts('970,284 1121,284'), 15, 3);
  mesh(g, pts('970,286 1121,286'), pts('970,328 1100,328 1128,317'), 34, 15);
  mesh(g, pts('970,288 1060,285 1115,296'), pts('970,328 1090,327 1122,308'), 12, 9, 3, 'dark');
  line(g, 'outline', '970,295 985,288 1010,285 1060,285', '983,268 982,285', '1036,268 1034,284', '1085,268 1080,285', '1117,268 1108,285');
  line(g, 'edge', '970,267 1136,267 1121,284 970,284', '973,290 984,283', '1121,284 1115,294 1117,302 1125,303 1131,308 1128,317 1121,321 1112,325 1100,328 970,329');
  trail(g, '982,290 982,329', 9);
  trail(g, '1034,288 1033,308 1036,316 1036,326 1029,329', 13);
  trail(g, '1080,288 1077,300 1083,312 1086,320 1081,325 1088,327', 14);
  trail(g, '1106,286 1100,295 1103,302 1113,305 1116,312 1113,321 1103,326', 13);
  trail(g, '1119,287 1115,294 1117,302 1125,303 1131,310 1128,317', 7);
  dots(g, 'pt-b', pts('983,267 1036,267 1085,267 1117,267 982,284 1034,284 1080,284 1109,284 1122,284 1114,299 1117,302 1123,304 1132,307 1128,317 1121,321 1112,325 1048,329 1052,329 1056,329 1062,329 1077,329'));
  dots(g, 'pt-s', pts('1136,267'));
  add(g, 'rect', { x: 1066, y: 326, width: 4, height: 4, fill: '#d814d8' });
}

/* half-breadth view */
{
  const g = document.getElementById('plan');
  skin(g, '15,639 31,635 46,634 180,633 180,712 46,712 30,710 17,707 17,673');
  mesh(g, pts('15,640 46,634 180,634'), pts('15,673 180,673'), 30, 13);
  mesh(g, pts('18,673 180,673'), pts('18,706 46,712 180,712'), 24, 9);
  mesh(g, pts('50,673 180,688'), pts('20,706 180,710'), 9, 7, 0, 'dark');
  line(g, 'outline', '17,673 17,707 30,710 46,712 180,712', '22,673 20,706', '85,673 120,674 180,687');
  line(g, 'edge', '15,673 15,639 31,635 46,634 180,633', '15,673 180,673', '20,638 21,673', '100,673 120,671 150,665 180,659');
  trail(g, '25,639 25,650 26,660 27,668', 4); trail(g, '32,637 33,643 35,652 38,661', 4); trail(g, '47,641 48,648 52,655 58,663 62,669', 5);
  trail(g, '62,633 62,646 67,658 74,664 84,667', 9); trail(g, '83,635 85,653 91,661 101,669', 9); trail(g, '106,634 107,651 112,664 119,671', 11);
  trail(g, '133,635 134,660 136,671', 11); trail(g, '157,633 157,671', 11); trail(g, '58,669 70,672 84,668', 9);
  dots(g, 'pt-b', pts('23,638 46,634 82,633 106,633 133,633 157,633 28,673 32,673 56,673 60,673 64,673 82,673 96,673 106,672 138,673 157,673 20,650 21,666'));
  dots(g, 'pt-s', pts('16,639 16,673 21,673'));
}

/* body plan */
{
  const g = document.getElementById('bodyplan');
  const edge = '655,735 655,783 657,800 665,815 680,829 700,834 863,835';
  const edgeR = '1071,602 1071,785 1069,795 1062,815 1050,828 1030,834 863,835';
  skin(g, '655,602 ' + edge + ' 1030,834 1050,828 1062,815 1069,795 1071,785 1071,602');
  mesh(g, pts(edge), pts('863,640 863,835'), 46, 9, 6);
  mesh(g, pts(edgeR), pts('863,640 863,835'), 58, 11, -6);
  fan(g, 'mesh', '657,640 657,780 680,827', '863,700 863,834 863,834', 34, 18);
  fan(g, 'mesh', '1069,602 1069,780 1046,827', '863,660 863,834 863,834', 44, 18);
  fan(g, 'mesh', '660,660 860,660', '690,832 860,834', 34, 0);
  fan(g, 'mesh', '866,620 1070,620', '866,834 1036,832', 38, 0);
  fan(g, 'mesh', '700,720 863,740', '657,740 760,834', 22, 10);
  fan(g, 'mesh', '1071,610 960,610 866,740', '866,730 900,834 1050,826', 30, 4);
  fan(g, 'dark', '657,640 657,780 672,822', '863,760 863,834 863,834', 10, 24);
  fan(g, 'dark', '1069,606 1069,780 1054,822', '863,740 863,834 863,834', 12, 24);
  fan(g, 'dark', '690,700 850,700', '668,812 800,833', 8, 8);
  fan(g, 'dark', '1060,640 880,700', '1058,812 920,833', 9, 8);
  mesh(g, pts('960,509 1037,509'), pts('940,602 1026,602'), 8, 8);
  mesh(g, pts('1039,511 1070,511'), pts('1030,602 1070,602'), 12, 7);
  line(g, 'dark', '985,509 960,560', '1040,520 1003,602', '1020,509 974,602', '960,535 1037,528', '960,576 1034,570');
  line(g, 'outline', '1037,509 1038,545 1036,570 1026,600 1005,628', '960,549 1037,545 1055,552 1065,563 1070,580 1070,602', '1058,602 1066,610 1069,630');
  line(g, 'edge', '960,509 1071,509', '960,602 1071,602 1071,785', '655,731 655,783', '863,640 863,834', '700,834 863,835 1030,834');
  trail(g, '657,775 657,792 662,808 675,822 692,831 717,834', 20);
  trail(g, '1069,775 1069,795 1064,808 1054,820 1042,828 1024,833 1005,834', 17);
  trail(g, '721,834 910,834', 32);
  dots(g, 'pt-w', pts('657,733 661,751 674,751 657,762 669,767 681,781 691,769 708,750 732,761 727,733 761,741 766,771 795,752 812,772 823,736 840,754 855,746 861,744 879,747 893,751 904,752 907,741 910,733 902,764 890,772 900,782 876,772 851,770 841,777 850,784 830,788 840,792 831,801 817,798 796,807 786,789 756,801 772,814 735,789 711,779 715,803 731,811 748,820 699,813 696,792 685,804 685,820 696,825 715,821 728,826 709,829 751,831 773,829 793,828 811,825 825,821 835,816 843,812 848,809 673,794 664,783 675,812'));
  dots(g, 'pt-w', pts('873,793 884,794 896,799 871,813 878,813 890,815 867,826 874,827 884,827 909,830 924,824 935,815 944,807 953,796 958,789 962,781 968,772 973,763 977,754 990,728 1003,700 1057,707 1045,748 1035,773 1025,792 1014,807 1003,816 990,823 990,620 1043,625 1015,655 981,690 1062,660 1068,632 1069,690 1069,724 1069,760 1067,783 1036,660 986,655 1020,678'));
  dots(g, 'pt-b', pts('991,509 1041,509 1067,509 1070,509 1003,602 1056,602 1070,602 1070,654 1070,748 1070,786 656,750 656,770 656,784 863,734 863,746 863,766 863,772 863,781 863,793 863,806 863,813 863,826 713,834 724,834 756,834 788,834 850,834 856,834 876,834 939,834 1001,834 1013,834'));
}

/* chart grid, ticks and scale labels */
{
  const g = document.getElementById('axes');
  for (let i = 0; i <= 12; i++) {
    const y = Math.round(643 - i * 28.65) + .5;
    const v = String(1000 + i * 200);
    add(g, 'path', { class: 'gridline', d: `M628 ${y}H951` });
    add(g, 'path', { class: 'tick', d: `M622 ${y}h5M624 ${y + (i ? 14 : -14)}h3` });
    add(g, 'text', { class: 'end', x: 620, y: y + 3.5 }, v[0] + ' ' + v.slice(1));
  }
  ['11.5', '12', '12.5', '13', '13.5', '14', '14.5'].forEach((v, i) => {
    const x = Math.round(653 + i * 42.6) + .5;
    add(g, 'path', { class: 'gridline', d: `M${x} 289V669` });
    add(g, 'path', { class: 'tick', d: `M${x} 669v5` });
    add(g, 'text', { class: 'mid', x: x - 1, y: 687 }, v);
  });
  for (let x = 627.5; x < 951; x += 8.5) add(g, 'path', { class: 'tick', d: `M${x} 669v3` });
}

const first = document.getElementById('vmin');
first.focus();
first.select();
```
